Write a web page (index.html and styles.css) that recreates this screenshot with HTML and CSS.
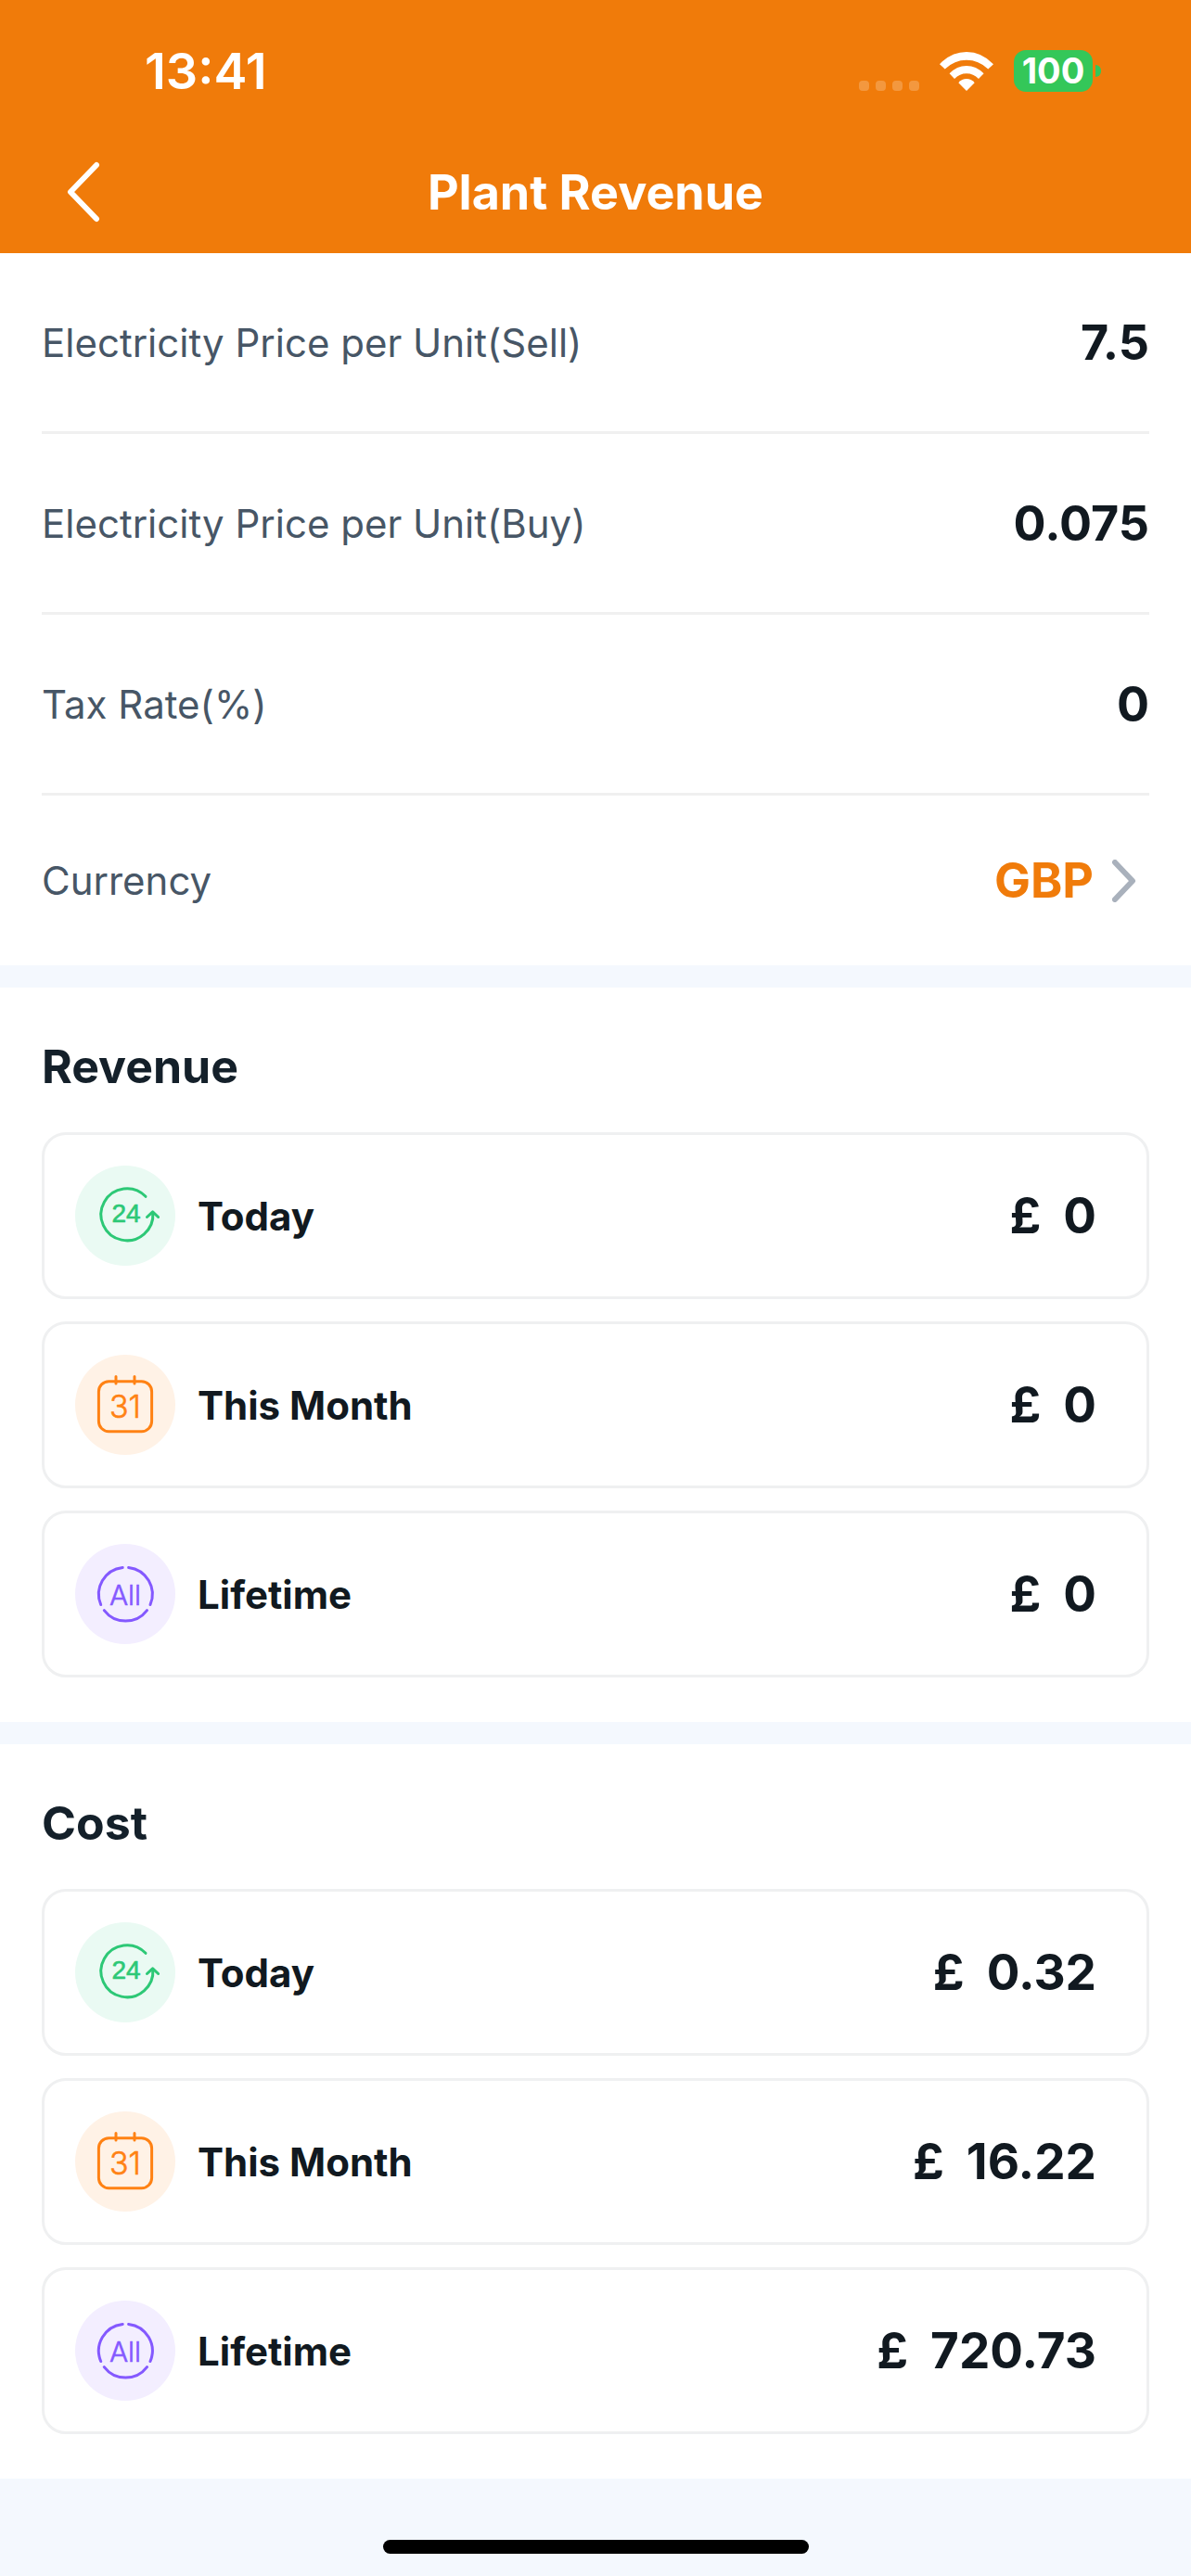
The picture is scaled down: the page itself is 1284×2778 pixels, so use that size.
FILE: index.html
```html
<!DOCTYPE html>
<html lang="en">
<head>
  <meta charset="utf-8">
  <meta name="viewport" content="width=device-width, initial-scale=1">
  <title>Plant Revenue</title>
  <link rel="stylesheet" href="styles.css">
</head>
<body>
  <svg class="sprite" aria-hidden="true">
    <symbol id="icon-today" viewBox="0 0 108 108">
      <path d="M76 33.3A28 28 0 1 0 83.8 50.5" />
      <path d="M77.5 55.5L83.6 49.8L89.6 55.5" />
      <text class="glyph glyph-today" x="55" y="61" text-anchor="middle">24</text>
    </symbol>
    <symbol id="icon-month" viewBox="0 0 108 108">
      <rect x="25.4" y="28.7" width="57.2" height="54" rx="11" />
      <path d="M44 23.5V31M64 23.5V31" />
      <text class="glyph glyph-month" x="54" y="68" text-anchor="middle">31</text>
    </symbol>
    <symbol id="icon-lifetime" viewBox="0 0 108 108">
      <path d="M51.2 25.4A29 29 0 0 0 27.7 65.5M57.6 25.4A29 29 0 0 1 81 65.5M31.3 71.6A29 29 0 0 0 77.5 71.6" />
      <text class="glyph glyph-lifetime" x="54" y="66" text-anchor="middle">All</text>
    </symbol>
  </svg>

  <div class="app">
    <header class="header">
      <div class="status-bar">
        <span class="clock">13:41</span>
        <div class="status-icons">
          <span class="signal"><i></i><i></i><i></i><i></i></span>
          <svg class="wifi" viewBox="0 0 58 42" aria-hidden="true">
            <path d="M0 13.2Q12.500 0 29 0T58 13.200L52.300 18.500Q42 8.800 29 8.800T5.700 18.500Z" />
            <path d="M10.600 23.300Q18.500 15 29 15T47.600 23.300L42 28.900Q36.500 23.200 29 23.200T16 28.900Z" />
            <path d="M20.300 33.200Q24 29 29 29T37.700 33.200L29 42Z" />
          </svg>
          <span class="battery">
            <span class="battery-level">100</span>
            <span class="battery-tip"></span>
          </span>
        </div>
      </div>
      <nav class="nav-bar">
        <button class="back" type="button" aria-label="Back">
          <svg viewBox="0 0 36 66" aria-hidden="true"><path d="M32 4L4 33L32 62" /></svg>
        </button>
        <h1 class="title">Plant Revenue</h1>
      </nav>
    </header>

    <main class="main">
      <section class="settings">
        <div class="row"><span class="row-label">Electricity Price per Unit(Sell)</span><span class="row-value">7.5</span></div>
        <div class="row"><span class="row-label">Electricity Price per Unit(Buy)</span><span class="row-value">0.075</span></div>
        <div class="row"><span class="row-label">Tax Rate(%)</span><span class="row-value">0</span></div>
        <button class="row row-button" type="button">
          <span class="row-label">Currency</span>
          <span class="currency">GBP
            <svg class="chevron" viewBox="0 0 26 46" aria-hidden="true"><path d="M3 3L22 23L3 43" /></svg>
          </span>
        </button>
      </section>

      <section class="group">
        <h2 class="group-title">Revenue</h2>
        <ul class="cards">
          <li class="card">
            <svg class="badge badge-today" aria-hidden="true"><use href="#icon-today" /></svg>
            <span class="card-label">Today</span>
            <span class="amount"><span>£</span><span>0</span></span>
          </li>
          <li class="card">
            <svg class="badge badge-month" aria-hidden="true"><use href="#icon-month" /></svg>
            <span class="card-label">This Month</span>
            <span class="amount"><span>£</span><span>0</span></span>
          </li>
          <li class="card">
            <svg class="badge badge-lifetime" aria-hidden="true"><use href="#icon-lifetime" /></svg>
            <span class="card-label">Lifetime</span>
            <span class="amount"><span>£</span><span>0</span></span>
          </li>
        </ul>
      </section>

      <section class="group">
        <h2 class="group-title">Cost</h2>
        <ul class="cards">
          <li class="card">
            <svg class="badge badge-today" aria-hidden="true"><use href="#icon-today" /></svg>
            <span class="card-label">Today</span>
            <span class="amount"><span>£</span><span>0.32</span></span>
          </li>
          <li class="card">
            <svg class="badge badge-month" aria-hidden="true"><use href="#icon-month" /></svg>
            <span class="card-label">This Month</span>
            <span class="amount"><span>£</span><span>16.22</span></span>
          </li>
          <li class="card">
            <svg class="badge badge-lifetime" aria-hidden="true"><use href="#icon-lifetime" /></svg>
            <span class="card-label">Lifetime</span>
            <span class="amount"><span>£</span><span>720.73</span></span>
          </li>
        </ul>
      </section>
    </main>

    <footer class="home-area"><span class="home-indicator"></span></footer>
  </div>
</body>
</html>
```

FILE: styles.css
```css
* {
  box-sizing: border-box;
}

body {
  margin: 0;
  background: #f4f8fe;
  color: #111920;
  font-family: Inter, "Liberation Sans", sans-serif;
}

h1,
h2,
ul {
  margin: 0;
  padding: 0;
}

button {
  border: 0;
  padding: 0;
  background: none;
  font: inherit;
  color: inherit;
}

.sprite {
  display: none;
}

.app {
  display: flex;
  flex-direction: column;
  min-height: 100vh;
}

/* Header */
.header {
  background: #f07b0a;
  color: #fff;
}

.status-bar {
  display: flex;
  align-items: center;
  justify-content: space-between;
  height: 141px;
  padding: 12px 97px 0 156px;
}

.clock {
  font-size: 54px;
  font-weight: 600;
}

.status-icons {
  display: flex;
  align-items: center;
  gap: 22px;
}

.signal {
  display: flex;
  align-items: flex-end;
  gap: 7px;
  height: 42px;
}

.signal i {
  width: 11px;
  height: 11px;
  border-radius: 4px;
  background: rgba(255, 255, 255, 0.22);
}

.wifi {
  width: 58px;
  height: 42px;
  fill: #fff;
}

.battery {
  display: flex;
  align-items: center;
  gap: 3px;
}

.battery-level {
  width: 85px;
  border-radius: 13px;
  background: #34c759;
  font-size: 38px;
  font-weight: 700;
  line-height: 45px;
  text-align: center;
}

.battery-tip {
  width: 6px;
  height: 13px;
  border-radius: 0 6px 6px 0;
  background: #34c759;
}

.nav-bar {
  display: grid;
  grid-template-columns: 1fr auto 1fr;
  align-items: center;
  height: 132px;
  padding: 0 72px;
}

.back {
  justify-self: start;
  display: flex;
}

.back svg {
  width: 36px;
  height: 66px;
  fill: none;
  stroke: #fff;
  stroke-width: 6;
  stroke-linecap: round;
  stroke-linejoin: round;
}

.title {
  font-size: 52px;
  font-weight: 700;
}

/* Price settings */
.main {
  display: flex;
  flex-direction: column;
  gap: 24px;
}

.settings {
  padding: 0 45px;
  background: #fff;
}

.row {
  display: flex;
  align-items: center;
  justify-content: space-between;
  width: 100%;
  height: 195px;
  border-bottom: 3px solid #f0f0f0;
}

.row-button {
  height: 183px;
  border-bottom: 0;
  padding-right: 14px;
}

.row-label {
  color: #475666;
  font-size: 42px;
}

.row-value,
.currency {
  font-size: 52px;
  font-weight: 700;
}

.currency {
  display: flex;
  align-items: center;
  gap: 20px;
  color: #f07b0a;
}

.chevron {
  width: 26px;
  height: 46px;
  fill: none;
  stroke: #a9b1bc;
  stroke-width: 6;
  stroke-linecap: round;
  stroke-linejoin: round;
}

/* Revenue and cost groups */
.group {
  padding: 53px 45px 48px;
  background: #fff;
}

.group-title {
  margin-bottom: 39px;
  color: #14202a;
  font-size: 50px;
  font-weight: 700;
  line-height: 64px;
}

.cards {
  display: flex;
  flex-direction: column;
  gap: 24px;
  list-style: none;
}

.card {
  display: flex;
  align-items: center;
  gap: 24px;
  padding: 33px 54px 33px 33px;
  border: 3px solid #eff0f1;
  border-radius: 26px;
}

.badge {
  width: 108px;
  height: 108px;
  border-radius: 50%;
  fill: none;
  stroke-width: 3;
  stroke-linecap: round;
  stroke-linejoin: round;
}

.badge-today {
  background: #eafaf3;
  color: #2dc876;
  stroke: #2dc876;
}

.badge-month {
  background: #fff2e6;
  color: #ff8214;
  stroke: #ff8214;
}

.badge-lifetime {
  background: #f3eeff;
  color: #8459ff;
  stroke: #8459ff;
}

.glyph {
  fill: currentColor;
  font-family: Inter, "Liberation Sans", sans-serif;
  font-weight: 300;
  stroke-width: 0.6px;
}

.glyph-today {
  font-family: "Liberation Sans", sans-serif;
  font-size: 28px;
  font-weight: 400;
}

.glyph-month {
  font-size: 34px;
}

.glyph-lifetime {
  font-size: 30px;
}

.card-label {
  flex: 1;
  font-size: 42px;
  font-weight: 700;
}

.amount {
  display: flex;
  gap: 24px;
  font-size: 53px;
  font-weight: 700;
}

/* Home indicator */
.home-area {
  display: flex;
  flex: 1;
  align-items: flex-end;
  justify-content: center;
  padding: 66px 0 24px;
}

.home-indicator {
  width: 459px;
  height: 15px;
  border-radius: 8px;
  background: #000;
}
```
